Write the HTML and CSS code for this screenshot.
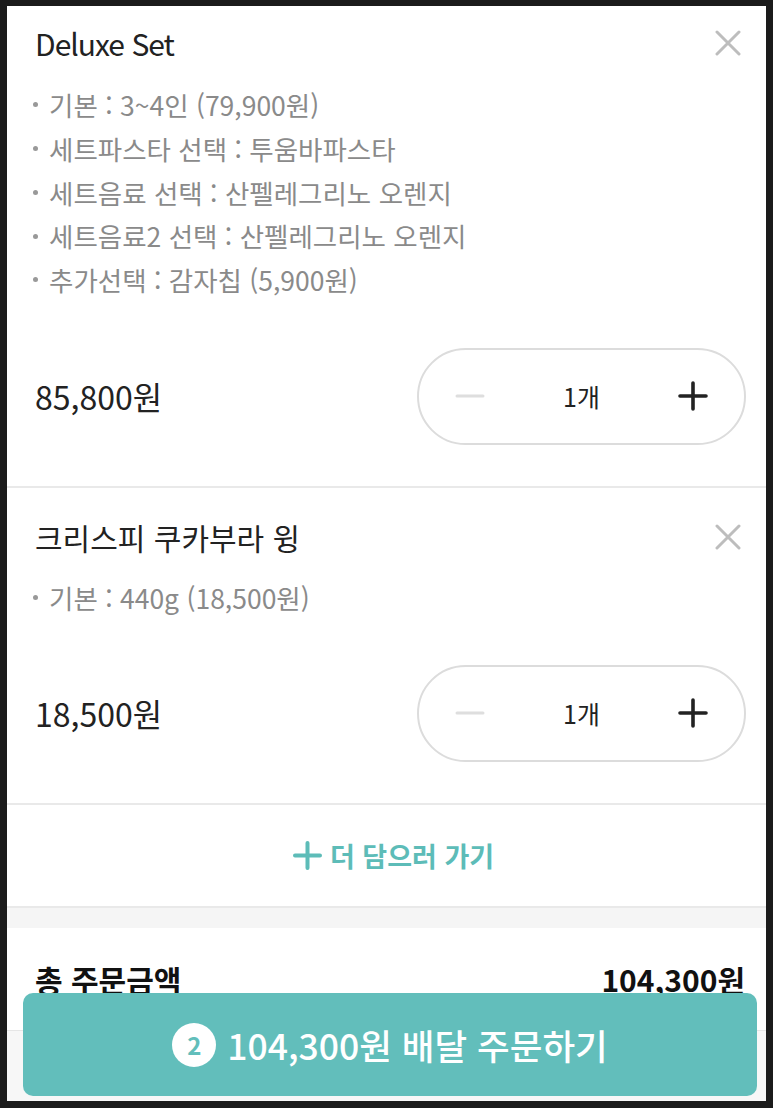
FILE: index.html
```html
<!DOCTYPE html>
<html lang="ko">
<head>
<meta charset="utf-8">
<link rel="stylesheet" href="styles.css">
</head>
<body>
<div class="page">
  <section class="item item-first">
    <div class="item-head">
      <h2 class="item-title item-title-latin">Deluxe Set</h2>
      <svg class="close" viewBox="0 0 26 26" width="26" height="26"><path d="M2 2 L24 24 M24 2 L2 24" stroke="#bdbdbd" stroke-width="3" stroke-linecap="round" fill="none"/></svg>
    </div>
    <ul class="opts">
      <li>기본 : 3~4인 (79,900원)</li>
      <li>세트파스타 선택 : 투움바파스타</li>
      <li>세트음료 선택 : 산펠레그리노 오렌지</li>
      <li>세트음료2 선택 : 산펠레그리노 오렌지</li>
      <li>추가선택 : 감자칩 (5,900원)</li>
    </ul>
    <div class="price-row">
      <span class="price">85,800원</span>
      <div class="stepper">
        <svg class="minus" viewBox="0 0 30 30" width="30" height="30"><path d="M2 15 H28" stroke="#dedede" stroke-width="3" stroke-linecap="round"/></svg>
        <span class="qty">1개</span>
        <svg class="plus" viewBox="0 0 30 30" width="30" height="30"><path d="M2 15 H28 M15 2 V28" stroke="#222" stroke-width="3.6" stroke-linecap="round"/></svg>
      </div>
    </div>
  </section>
  <section class="item item-second">
    <div class="item-head">
      <h2 class="item-title">크리스피 쿠카부라 윙</h2>
      <svg class="close" viewBox="0 0 26 26" width="26" height="26"><path d="M2 2 L24 24 M24 2 L2 24" stroke="#bdbdbd" stroke-width="3" stroke-linecap="round" fill="none"/></svg>
    </div>
    <ul class="opts">
      <li>기본 : 440g (18,500원)</li>
    </ul>
    <div class="price-row">
      <span class="price">18,500원</span>
      <div class="stepper">
        <svg class="minus" viewBox="0 0 30 30" width="30" height="30"><path d="M2 15 H28" stroke="#dedede" stroke-width="3" stroke-linecap="round"/></svg>
        <span class="qty">1개</span>
        <svg class="plus" viewBox="0 0 30 30" width="30" height="30"><path d="M2 15 H28 M15 2 V28" stroke="#222" stroke-width="3.6" stroke-linecap="round"/></svg>
      </div>
    </div>
  </section>
  <div class="more">
    <svg class="more-plus" viewBox="0 0 29 29" width="29" height="29"><path d="M2 14.5 H27 M14.5 2 V27" stroke="#5dbcb8" stroke-width="4" stroke-linecap="round"/></svg>
    <span>더 담으러 가기</span>
  </div>
  <div class="gap"></div>
  <div class="total">
    <span class="total-label">총 주문금액</span>
    <span class="total-value">104,300원</span>
  </div>
  <div class="filler"></div>
</div>
<button class="order-btn" type="button"><span class="count">2</span><span class="order-text">104,300원 배달 주문하기</span></button>
</body>
</html>
```
FILE: styles.css
```css
* { box-sizing: border-box; }
html, body { margin: 0; padding: 0; }
body {
  background: #1b1b1b;
  font-family: "Noto Sans CJK KR", "Noto Sans", sans-serif;
  color: #222;
  width: 773px;
  height: 1108px;
  overflow: hidden;
}
.page {
  margin: 6px 7px 7px 7px;
  height: 1095px;
  background: #fff;
  display: flex;
  flex-direction: column;
  overflow: hidden;
}
.item {
  padding: 17px 20px 41px 28px;
  border-bottom: 2px solid #e9e9e9;
}
.item-second { padding-top: 29px; }
.item-head {
  display: flex;
  justify-content: space-between;
  align-items: center;
  height: 40px;
}
.item-title {
  margin: 0;
  font-size: 30px;
  font-weight: 400;
  line-height: 40px;
  color: #222;
}
.item-title-latin { letter-spacing: -1px; }
.close { margin-right: 5px; flex: none; }
.opts {
  list-style: none;
  margin: 20px 0 0 -2px;
  padding: 0;
}
.item-second .opts { margin-top: 19px; }
.opts li {
  font-size: 26.5px;
  line-height: 43.75px;
  height: 43.75px;
  color: #8a8a8a;
  display: flex;
  align-items: center;
}
.opts li::before {
  content: "";
  width: 5px;
  height: 5px;
  border-radius: 50%;
  background: #999;
  margin-right: 11px;
  flex: none;
}
.price-row {
  margin-top: 46px;
  display: flex;
  justify-content: space-between;
  align-items: center;
}
.item-second .price-row { margin-top: 45px; }
.price {
  font-size: 32px;
  color: #222;
}
.stepper {
  width: 329px;
  height: 97px;
  border: 2px solid #dcdcdc;
  border-radius: 49px;
  display: flex;
  align-items: center;
  justify-content: space-between;
  padding: 0 36px;
}
.qty { font-size: 25px; color: #222; }
.more {
  height: 103px;
  display: flex;
  align-items: center;
  justify-content: center;
  gap: 8px;
  padding-left: 14px;
  color: #5dbcb8;
  font-size: 27px;
  font-weight: 700;
  border-bottom: 2px solid #e9e9e9;
}
.gap {
  height: 20px;
  background: #f5f5f5;
}
.total {
  height: 103px;
  display: flex;
  justify-content: space-between;
  align-items: center;
  padding: 0 21px 0 28px;
  border-bottom: 1px solid #e6e6e6;
  font-size: 30px;
  font-weight: 700;
  color: #111;
}
.filler {
  flex: 1;
  background: #f7f7f7;
}
.order-btn {
  position: fixed;
  left: 23px;
  right: 16px;
  bottom: 12px;
  height: 103px;
  border: 0;
  border-radius: 10px;
  background: #62bebb;
  color: #fff;
  display: flex;
  align-items: center;
  justify-content: center;
  gap: 11px;
  font-family: "Noto Sans CJK KR", "Noto Sans", sans-serif;
  font-size: 35.5px;
  font-weight: 500;
  padding: 0;
}
.count {
  width: 44px;
  height: 44px;
  border-radius: 50%;
  background: #fff;
  color: #62bebb;
  font-size: 24px;
  font-weight: 700;
  display: flex;
  align-items: center;
  justify-content: center;
}
```
